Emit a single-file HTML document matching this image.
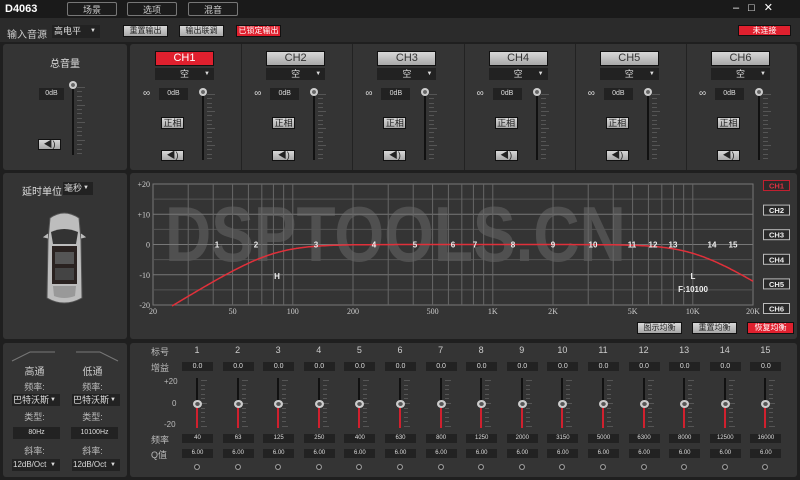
<!DOCTYPE html>
<html><head><meta charset="utf-8"><style>
*{margin:0;padding:0;box-sizing:border-box}
body{width:800px;height:480px;background:#1f1f1f;position:relative;overflow:hidden;font-family:"Liberation Sans","Noto Sans CJK SC",sans-serif;color:#ddd;font-size:9px}
.a{position:absolute}
.panel{position:absolute;background:#343434;border-radius:3px}
.btn{position:absolute;background:linear-gradient(#d8d8d8,#a8a8a8);color:#222;text-align:center;border:1px solid #111;font-size:9px}
.tb{position:absolute;border:1px solid #777;border-radius:2px;color:#ccc;text-align:center;font-size:9px;line-height:14px;background:#1c1c1c}
.box{position:absolute;background:#222;color:#ddd;text-align:center;font-size:7px}
.dd{position:absolute;background:#222;color:#ddd;font-size:9px}
.dd:after{content:"▼";position:absolute;right:4px;top:0;font-size:6px}
.c{text-align:center}
</style></head><body>
<div class="a" style="left:0;top:0;width:800px;height:18px;background:#1a1a1a"></div>
<div class="a" style="left:5px;top:3px;font-size:11px;font-weight:bold;color:#fff">D4063</div>
<div class="tb" style="left:67px;top:2px;width:50px;height:14px">场景</div>
<div class="tb" style="left:127px;top:2px;width:50px;height:14px">选项</div>
<div class="tb" style="left:188px;top:2px;width:50px;height:14px">混音</div>
<div class="a" style="left:733px;top:1px;font-size:11px;color:#fff;letter-spacing:9px">–□✕</div>
<div class="a" style="left:0;top:18px;width:800px;height:24px;background:#2b2b2b"></div>
<div class="a" style="left:7px;top:26px;font-size:10px;color:#ccc">输入音源</div>
<div class="dd" style="left:52px;top:25px;width:48px;height:13px;padding-left:2px;line-height:13px">高电平</div>
<div class="btn" style="left:123px;top:25px;width:45px;height:12px;line-height:10px;font-size:8px">重置输出</div>
<div class="btn" style="left:179px;top:25px;width:45px;height:12px;line-height:10px;font-size:8px">输出联调</div>
<div class="btn" style="left:236px;top:25px;width:45px;height:12px;line-height:10px;font-size:8px;background:#e0202e;color:#fff">已锁定输出</div>
<div class="btn" style="left:738px;top:25px;width:53px;height:11px;line-height:9px;font-size:8px;background:#e0202e;color:#fff">未连接</div>

<div class="panel" style="left:3px;top:44px;width:124px;height:126px"></div>
<div class="panel" style="left:130px;top:44px;width:667px;height:126px"></div>
<div class="panel" style="left:3px;top:173px;width:124px;height:166px"></div>
<div class="panel" style="left:130px;top:173px;width:667px;height:166px"></div>
<div class="panel" style="left:3px;top:343px;width:124px;height:134px"></div>
<div class="panel" style="left:130px;top:343px;width:667px;height:134px"></div>

<div class="a" style="left:50px;top:55px;font-size:10px;color:#ddd">总音量</div>
<div class="box" style="left:39px;top:88px;width:25px;height:12px;line-height:12px">0dB</div>
<div class="btn" style="left:38px;top:139px;width:23px;height:11px;line-height:9px">◀)</div>
<div id="fader0"></div>

<div id="chs"></div>

<div class="a" style="left:22px;top:183px;font-size:10px;color:#ddd">延时单位</div>
<div class="dd" style="left:63px;top:182px;width:30px;height:13px;line-height:13px;padding-left:1px">毫秒</div>
<svg class="a" style="left:42px;top:210px" width="45" height="96" viewBox="0 0 45 96">
<path d="M8 8Q22 -2 37 8L39 30L40 88Q22 98 5 88L6 30Z" fill="#bdbdbd" stroke="#555"/>
<path d="M9 22Q22 16 36 22L34 34L11 34Z" fill="#333"/>
<rect x="10" y="36" width="25" height="38" fill="#2a2220"/>
<rect x="13" y="42" width="19" height="12" fill="#555"/><rect x="13" y="58" width="19" height="12" fill="#444"/>
<path d="M11 76L34 76L33 86Q22 90 12 86Z" fill="#999"/>
<path d="M6 24L2 27L6 28M39 24L43 27L39 28" stroke="#bbb" fill="#bbb"/>
</svg>

<div class="a" style="left:165px;top:194px;font-size:78px;font-weight:bold;color:rgba(255,255,255,0.14);line-height:80px;transform:scaleX(0.82);transform-origin:0 0;white-space:nowrap">DSPTOOLS.CN</div>
<svg class="a" id="g" style="left:130px;top:173px" width="667" height="166"></svg>

<div class="btn" style="left:637px;top:322px;width:45px;height:12px;line-height:10px;font-size:8px">图示均衡</div>
<div class="btn" style="left:692px;top:322px;width:45px;height:12px;line-height:10px;font-size:8px">重置均衡</div>
<div class="btn" style="left:747px;top:322px;width:47px;height:12px;line-height:10px;font-size:8px;background:#e0202e;color:#fff">恢复均衡</div>

<svg class="a" style="left:10px;top:350px" width="112" height="12"><path d="M2 11L20 2H45M66 2H90L108 11" stroke="#777" fill="none"/></svg>
<div class="a c" style="left:12px;top:363px;width:45px;font-size:10px;color:#ccc">高通</div>
<div class="a c" style="left:70px;top:363px;width:45px;font-size:10px;color:#ccc">低通</div>
<div class="a c" style="left:12px;top:380px;width:45px;color:#bbb">频率:</div>
<div class="a c" style="left:70px;top:380px;width:45px;color:#bbb">频率:</div>
<div class="dd" style="left:12px;top:394px;width:48px;height:12px;line-height:12px;padding-left:1px">巴特沃斯</div>
<div class="dd" style="left:72px;top:394px;width:48px;height:12px;line-height:12px;padding-left:1px">巴特沃斯</div>
<div class="a c" style="left:12px;top:410px;width:45px;color:#bbb">类型:</div>
<div class="a c" style="left:70px;top:410px;width:45px;color:#bbb">类型:</div>
<div class="box" style="left:13px;top:427px;width:47px;height:12px;line-height:12px">80Hz</div>
<div class="box" style="left:71px;top:427px;width:47px;height:12px;line-height:12px">10100Hz</div>
<div class="a c" style="left:12px;top:444px;width:45px;color:#bbb">斜率:</div>
<div class="a c" style="left:70px;top:444px;width:45px;color:#bbb">斜率:</div>
<div class="dd" style="left:12px;top:459px;width:48px;height:12px;line-height:12px;padding-left:1px;font-size:8px">12dB/Oct</div>
<div class="dd" style="left:72px;top:459px;width:48px;height:12px;line-height:12px;padding-left:1px;font-size:8px">12dB/Oct</div>

<div class="a" style="left:151px;top:345px;color:#bbb">标号</div>
<div class="a" style="left:151px;top:361px;color:#bbb">增益</div>
<div class="a" style="left:164px;top:377px;color:#bbb;font-size:8px">+20</div>
<div class="a" style="left:172px;top:399px;color:#bbb;font-size:8px">0</div>
<div class="a" style="left:164px;top:420px;color:#bbb;font-size:8px">-20</div>
<div class="a" style="left:151px;top:433px;color:#bbb">频率</div>
<div class="a" style="left:151px;top:448px;color:#bbb">Q值</div>
<div id="eq"></div>

<script>
function fader(x,y,h){
 let s='<div class="a" style="left:'+(x-1)+'px;top:'+y+'px;width:2px;height:'+h+'px;background:#111"></div>';
 for(let i=0;i<16;i++){let w=(i%4==0)?8:5;s+='<div class="a" style="left:'+(x+4)+'px;top:'+(y+2+i*(h-4)/15)+'px;width:'+w+'px;height:1px;background:#555"></div>';}
 s+='<div class="a" style="left:'+(x-4)+'px;top:'+(y-4)+'px;width:8px;height:8px;border-radius:50%;background:radial-gradient(#666 30%,#ccc 40%)"></div>';
 return s;}
document.getElementById('fader0').outerHTML=fader(73,85,70);
let s='';
for(let i=0;i<6;i++){
 let L=130+i*111.2, cx=L+54;
 if(i>0)s+='<div class="a" style="left:'+L+'px;top:44px;width:1px;height:126px;background:#222"></div>';
 s+='<div class="btn" style="left:'+(cx-29)+'px;top:51px;width:59px;height:15px;line-height:13px;font-size:11px;'+(i==0?'background:#e0202e;color:#fff':'color:#333')+'">CH'+(i+1)+'</div>';
 s+='<div class="dd c" style="left:'+(cx-29)+'px;top:68px;width:59px;height:12px;line-height:12px">空</div>';
 s+='<div class="a" style="left:'+(cx-41)+'px;top:88px;font-size:10px;color:#ddd">∞</div>';
 s+='<div class="box" style="left:'+(cx-25)+'px;top:88px;width:29px;height:12px;line-height:12px">0dB</div>';
 s+='<div class="btn" style="left:'+(cx-23)+'px;top:117px;width:23px;height:12px;line-height:10px">正相</div>';
 s+='<div class="btn" style="left:'+(cx-23)+'px;top:150px;width:23px;height:11px;line-height:9px">◀)</div>';
 s+=fader(cx+19,92,68);
}
document.getElementById('chs').outerHTML=s;
let fr=[40,63,125,250,400,630,800,1250,2000,3150,5000,6300,8000,12500,16000];
let e='';
for(let i=0;i<15;i++){let x=197+i*40.6;
 e+='<div class="a c" style="left:'+(x-10)+'px;top:345px;width:20px;color:#ccc">'+(i+1)+'</div>';
 e+='<div class="box" style="left:'+(x-15)+'px;top:362px;width:31px;height:9px;line-height:9px">0.0</div>';
 e+='<div class="a" style="left:'+(x-1)+'px;top:378px;width:2px;height:50px;background:#111"></div>';
 e+='<div class="a" style="left:'+(x-1)+'px;top:404px;width:2px;height:24px;background:#d0202e"></div>';
 for(let k=0;k<11;k++)e+='<div class="a" style="left:'+(x+4)+'px;top:'+(380+k*4.6)+'px;width:'+(k%5==0?6:4)+'px;height:1px;background:#555"></div>';
 e+='<div class="a" style="left:'+(x-4)+'px;top:400px;width:9px;height:8px;border-radius:50%;background:radial-gradient(#555 30%,#ccc 40%)"></div>';
 e+='<div class="box" style="left:'+(x-15)+'px;top:434px;width:31px;height:9px;line-height:9px;font-size:6px">'+fr[i]+'</div>';
 e+='<div class="box" style="left:'+(x-15)+'px;top:449px;width:31px;height:9px;line-height:9px;font-size:6px">6.00</div>';
 e+='<div class="a" style="left:'+(x-3)+'px;top:464px;width:6px;height:6px;border-radius:50%;background:radial-gradient(#222 40%,#999 50%)"></div>';
}
document.getElementById('eq').outerHTML=e;
let X0=23,W=600,Y0=11,H=121;
function fx(f){return X0+(Math.log10(f)-Math.log10(20))/3*W}
function fy(d){return Y0+(20-d)/40*H}
let g='<rect x="'+X0+'" y="'+Y0+'" width="'+W+'" height="'+H+'" fill="none" stroke="#777"/>';
for(let d=-15;d<20;d+=5)g+='<line x1="'+X0+'" x2="'+(X0+W)+'" y1="'+fy(d)+'" y2="'+fy(d)+'" stroke="'+(d%10==0?'#777':'#555')+'"/>';
for(let dec of [10,100,1000,10000])for(let m=1;m<10;m++){let f=dec*m;if(f<=20||f>=20000)continue;g+='<line x1="'+fx(f)+'" x2="'+fx(f)+'" y1="'+Y0+'" y2="'+(Y0+H)+'" stroke="#666"/>';}
[['+20',20],['+10',10],['0',0],['-10',-10],['-20',-20]].forEach(a=>g+='<text x="20" y="'+(fy(a[1])+3)+'" fill="#ccc" font-size="8" text-anchor="end" font-family="Liberation Serif">'+a[0]+'</text>');
[[20,'20'],[50,'50'],[100,'100'],[200,'200'],[500,'500'],[1000,'1K'],[2000,'2K'],[5000,'5K'],[10000,'10K'],[20000,'20K']].forEach(a=>g+='<text x="'+fx(a[0])+'" y="141" fill="#ccc" font-size="8" text-anchor="middle" font-family="Liberation Serif">'+a[1]+'</text>');
let p='';
for(let i=0;i<=600;i++){let f=20*Math.pow(10,i/200);let d=-10*Math.log10(1+Math.pow(80/f,4))-10*Math.log10(1+Math.pow(f/10100,4));if(d<-20.5)continue;p+=(p?'L':'M')+fx(f).toFixed(1)+' '+fy(d).toFixed(1);}
g+='<path d="'+p+'" stroke="#e0303a" stroke-width="1.5" fill="none"/>';
let nx=[87,126,186,244,285,323,345,383,423,463,502,523,543,582,603];
nx.forEach((x,i)=>g+='<text x="'+x+'" y="'+(fy(0)+3)+'" fill="#eee" font-size="8" font-weight="bold" text-anchor="middle">'+(i+1)+'</text>');
g+='<text x="147" y="106" fill="#eee" font-size="8" font-weight="bold" text-anchor="middle">H</text>';
g+='<text x="563" y="106" fill="#eee" font-size="8" font-weight="bold" text-anchor="middle">L</text>';
g+='<text x="563" y="119" fill="#eee" font-size="8" font-weight="bold" text-anchor="middle">F:10100</text>';
for(let i=0;i<6;i++){let y=7+i*24.6;g+='<rect x="633.5" y="'+(y+.5)+'" width="26" height="10" fill="#2a2a2a" stroke="'+(i==0?'#c02030':'#bbb')+'"/><text x="646.5" y="'+(y+8.5)+'" fill="'+(i==0?'#e03040':'#eee')+'" font-size="7.5" font-weight="bold" text-anchor="middle">CH'+(i+1)+'</text>';}
document.getElementById('g').innerHTML=g;
</script>
</body></html>
